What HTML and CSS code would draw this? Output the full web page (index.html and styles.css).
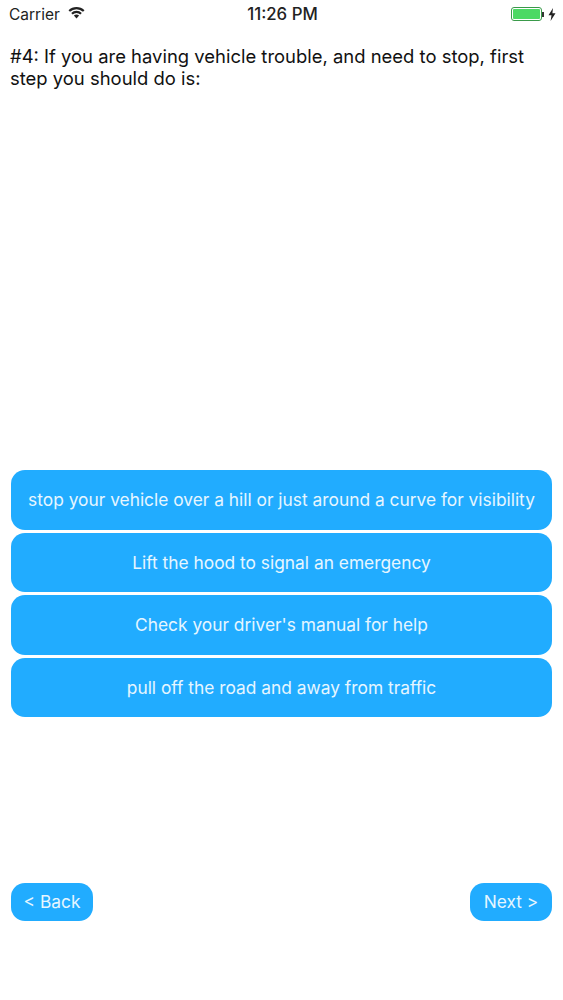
FILE: index.html
```html
<!DOCTYPE html>
<html lang="en">
<head>
    <meta charset="UTF-8">
    <meta name="viewport" content="width=device-width, initial-scale=1.0">
    <title>Question 4</title>
    <link rel="stylesheet" href="styles.css">
</head>
<body>
    <div class="status">
        <div class="status-left">
            <span>Carrier</span>
            <svg class="wifi" width="17" height="13" viewBox="0 0 17 13">
                <path d="M0.5 4.2 A11.5 11.5 0 0 1 16.5 4.2 L15 5.8 A9.4 9.4 0 0 0 2 5.8 Z" fill="#222"/>
                <path d="M3.2 6.9 A7.6 7.6 0 0 1 13.8 6.9 L12.3 8.5 A5.4 5.4 0 0 0 4.7 8.5 Z" fill="#222"/>
                <path d="M5.9 9.6 A3.8 3.8 0 0 1 11.1 9.6 L8.5 12.4 Z" fill="#222"/>
            </svg>
        </div>
        <div class="status-time">11:26 PM</div>
        <div class="status-right">
            <div class="battery"><div class="battery-fill"></div></div>
            <div class="battery-tip"></div>
            <svg class="bolt" width="8" height="13" viewBox="0 0 8 13">
                <path d="M5 0 L0.5 7.2 H3.5 L2.6 13 L7.5 5.2 H4.4 Z" fill="#222"/>
            </svg>
        </div>
    </div>

    <p class="question">#4: If you are having vehicle trouble, and need to stop, first step you should do is:</p>

    <div class="answers">
        <a href="#" class="answer">stop your vehicle over a hill or just around a curve for visibility</a>
        <a href="#" class="answer">Lift the hood to signal an emergency</a>
        <a href="#" class="answer">Check your driver's manual for help</a>
        <a href="#" class="answer">pull off the road and away from traffic</a>
    </div>

    <div class="nav">
        <a href="#" class="nav-btn">&lt; Back</a>
        <a href="#" class="nav-btn">Next &gt;</a>
    </div>
</body>
</html>
```

FILE: styles.css
```css
* {
    box-sizing: border-box;
}

html, body {
    margin: 0;
    padding: 0;
    background: #fff;
}

body {
    width: 563px;
    height: 1000px;
    font-family: Inter, "Liberation Sans", sans-serif;
    color: #111;
    overflow: hidden;
}

a {
    text-decoration: none;
}

.status {
    height: 28px;
    padding: 0 7px 0 9px;
    display: flex;
    align-items: center;
    justify-content: space-between;
    font-size: 15.5px;
    color: #222;
}

.status-left {
    width: 120px;
    display: flex;
    align-items: center;
    gap: 8px;
}

.wifi {
    margin-top: -3px;
}

.status-time {
    font-weight: 500;
    font-size: 16.8px;
}

.status-right {
    width: 120px;
    display: flex;
    align-items: center;
    justify-content: flex-end;
}

.battery {
    width: 31px;
    height: 14px;
    border: 1px solid #3a9a4a;
    border-radius: 3px;
    padding: 1px;
}

.battery-fill {
    height: 100%;
    background: #4cd964;
    border-radius: 1px;
}

.battery-tip {
    width: 2px;
    height: 5px;
    background: #333;
    margin-right: 4px;
}

.question {
    margin: 17px 10px 0;
    font-size: 18.45px;
    line-height: 22px;
    color: #111;
}

.answers {
    margin: 381px 11px 0;
    display: flex;
    flex-direction: column;
    gap: 3px;
}

.answer {
    height: 59.5px;
    display: flex;
    align-items: center;
    justify-content: center;
    background: #21acff;
    border-radius: 14px;
    color: #e6f6ff;
    font-size: 17.35px;
    white-space: nowrap;
}

.nav {
    margin: 165.5px 11px 0;
    display: flex;
    justify-content: space-between;
}

.nav-btn {
    width: 82px;
    height: 38px;
    display: flex;
    align-items: center;
    justify-content: center;
    background: #21acff;
    border-radius: 14px;
    color: #e6f6ff;
    font-size: 17.35px;
}
```
